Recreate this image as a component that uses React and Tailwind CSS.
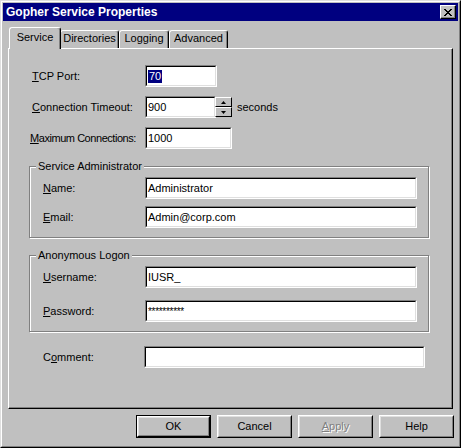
import React from "react";

// Win95-style sunken edit field
const Field = ({ width, children, className = "" }) => (
  <div
    className={`h-[22px] border border-t-[#808080] border-l-[#808080] border-b-white border-r-white ${className}`}
    style={{ width }}
  >
    <div className="h-full border border-t-black border-l-black border-b-[#dfdfdf] border-r-[#dfdfdf] bg-white flex items-center pl-[1px] overflow-hidden whitespace-nowrap">
      {children}
    </div>
  </div>
);

const Row = ({ label, labelWidth, children, className = "" }) => (
  <div className={`flex items-center ${className}`}>
    <div className="shrink-0 whitespace-nowrap" style={{ width: labelWidth }}>
      {label}
    </div>
    {children}
  </div>
);

const Key = ({ children }) => <span className="underline underline-offset-[1px]">{children}</span>;

const GroupBox = ({ title, children, className = "" }) => (
  <div
    className={`relative ml-[20px] w-[400px] border border-[#808080] shadow-[inset_1px_1px_0_#fff,1px_1px_0_#fff] ${className}`}
  >
    <div className="absolute -top-[8px] left-[6px] px-[2px] bg-[#c0c0c0] leading-[14px] whitespace-nowrap">
      {title}
    </div>
    {children}
  </div>
);

const Button = ({ children, isDefault, disabled }) => (
  <div
    className={`w-[75px] h-[23px] ${isDefault ? "border border-black" : ""}`}
  >
    <div className="h-full border border-t-white border-l-white border-b-black border-r-black">
      <div className="h-full border border-t-[#dfdfdf] border-l-[#dfdfdf] border-b-[#808080] border-r-[#808080] flex items-center justify-center">
        <span
          className={
            disabled ? "text-[#808080] [text-shadow:1px_1px_0_#fff]" : ""
          }
        >
          {children}
        </span>
      </div>
    </div>
  </div>
);

const SpinHalf = ({ up }) => (
  <div className="h-[10px] border border-t-white border-l-white border-b-black border-r-black bg-[#c0c0c0] flex items-center justify-center">
    <svg width="5" height="3" viewBox="0 0 5 3">
      {up ? (
        <path d="M2.5 0 L5 3 L0 3 Z" fill="#000" />
      ) : (
        <path d="M0 0 L5 0 L2.5 3 Z" fill="#000" />
      )}
    </svg>
  </div>
);

const Tab = ({ children, active, width }) =>
  active ? (
    <div
      className="relative z-10 h-[22px] -mx-[1px] bg-[#c0c0c0] border-l border-t border-r border-l-white border-t-white border-r-black rounded-t-[3px] shadow-[inset_-1px_0_0_#808080] flex items-start justify-center pt-[4px]"
      style={{ width }}
    >
      {children}
    </div>
  ) : (
    <div
      className="h-[18px] mb-px bg-[#c0c0c0] border-l border-t border-r border-l-white border-t-white border-r-black rounded-t-[3px] shadow-[inset_-1px_0_0_#808080] flex items-start justify-center pt-[2px]"
      style={{ width }}
    >
      {children}
    </div>
  );

export default function App() {
  return (
    <div className="w-[461px] h-[448px] bg-[#c0c0c0] font-['Liberation_Sans',Arial,sans-serif] text-[11px] text-black leading-none select-none">
      <div className="h-full border border-t-[#dfdfdf] border-l-[#dfdfdf] border-b-black border-r-black">
        <div className="h-full border border-t-white border-l-white border-b-[#808080] border-r-[#808080] p-px flex flex-col">
          {/* Title bar */}
          <div className="h-[18px] bg-[#000080] flex items-center justify-between pl-[3px] pr-[2px]">
            <span className="text-white font-bold text-[12px]">
              Gopher Service Properties
            </span>
            <div className="w-[16px] h-[14px] border border-t-white border-l-white border-b-black border-r-black bg-[#c0c0c0] shadow-[inset_-1px_-1px_0_#808080] flex items-center justify-center">
              <svg width="8" height="7" viewBox="0 0 8 7">
                <path
                  d="M0 0h2v1h1v1h2V1h1V0h2v1H7v1H6v1H5v1h1v1h1v1h1v1H6V6H5V5H3v1H2v1H0V6h1V5h1V4h1V3H2V2H1V1H0z"
                  fill="#000"
                />
              </svg>
            </div>
          </div>

          {/* Tabs + panel */}
          <div className="px-[5px] mt-[6px]">
            <div className="flex items-end ml-[2px] relative z-10 -mb-px">
              <Tab active width={52}>Service</Tab>
              <Tab width={59}>Directories</Tab>
              <Tab width={50}>Logging</Tab>
              <Tab width={59}>Advanced</Tab>
            </div>
            <div className="h-[361px] border border-t-white border-l-white border-b-black border-r-black shadow-[inset_-1px_-1px_0_#808080]">
              <div className="flex flex-col pt-[16px]">
                <Row label={<span className="pl-[23px]"><Key>T</Key>CP Port:</span>} labelWidth={136}>
                  <Field width={72}>
                    <span className="bg-[#000080] text-white px-[1px] leading-[13px]">70</span>
                  </Field>
                </Row>
                <Row
                  className="mt-[9px]"
                  label={<span className="pl-[23px]"><Key>C</Key>onnection Timeout:</span>}
                  labelWidth={136}
                >
                  <Field width={71}>900</Field>
                  <div className="w-[17px] h-[21px] -ml-px mt-px flex flex-col">
                    <SpinHalf up />
                    <SpinHalf />
                  </div>
                  <span className="ml-[5px]">seconds</span>
                </Row>
                <Row
                  className="mt-[9px]"
                  label={
                    <span className="pl-[21px] tracking-[-0.45px]">
                      <Key>M</Key>aximum Connections:
                    </span>
                  }
                  labelWidth={136}
                >
                  <Field width={87}>1000</Field>
                </Row>

                <GroupBox title="Service Administrator" className="mt-[17px] h-[72px] pt-[10px]">
                  <Row label={<span className="pl-[13px]"><Key>N</Key>ame:</span>} labelWidth={115}>
                    <Field width={272}>Administrator</Field>
                  </Row>
                  <Row className="mt-[7px]" label={<span className="pl-[13px]"><Key>E</Key>mail:</span>} labelWidth={115}>
                    <Field width={272}>Admin@corp.com</Field>
                  </Row>
                </GroupBox>

                <GroupBox title="Anonymous Logon" className="mt-[17px] h-[77px] pt-[10px]">
                  <Row label={<span className="pl-[13px]"><Key>U</Key>sername:</span>} labelWidth={115}>
                    <Field width={272}>IUSR_</Field>
                  </Row>
                  <Row className="mt-[12px]" label={<span className="pl-[13px]"><Key>P</Key>assword:</span>} labelWidth={115}>
                    <Field width={272}>
                      <span className="text-[10px] pt-[2px] tracking-[-0.3px]">**********</span>
                    </Field>
                  </Row>
                </GroupBox>

                <Row
                  className="mt-[14px]"
                  label={<span className="pl-[34px]">C<Key>o</Key>mment:</span>}
                  labelWidth={135}
                >
                  <Field width={281} />
                </Row>
              </div>
            </div>
          </div>

          {/* Buttons */}
          <div className="flex justify-end gap-[6px] pr-[4px] mt-[6px]">
            <Button isDefault>OK</Button>
            <Button>Cancel</Button>
            <Button disabled>
              <Key>A</Key>pply
            </Button>
            <Button>Help</Button>
          </div>
        </div>
      </div>
    </div>
  );
}
